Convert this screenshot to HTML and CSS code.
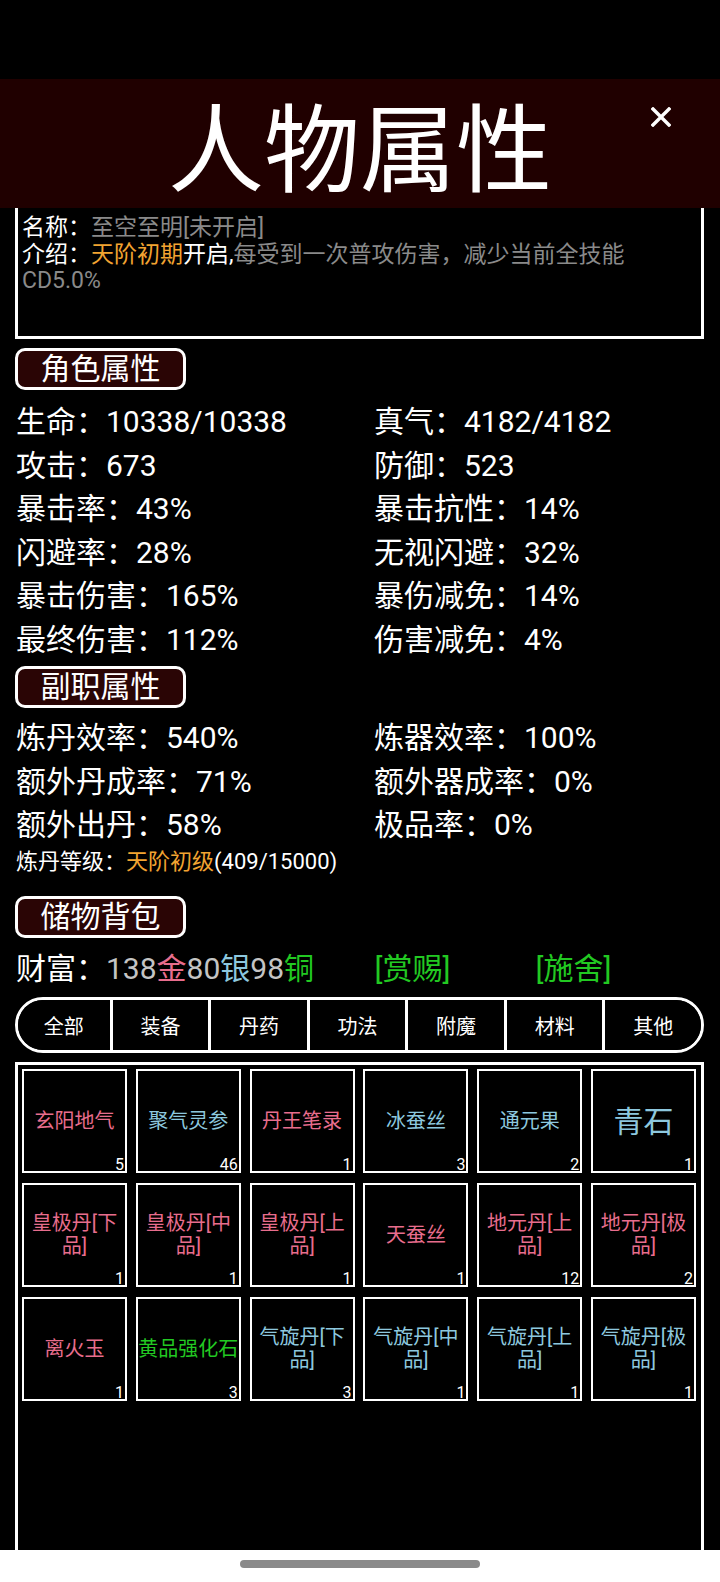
FILE: index.html
```html
<!DOCTYPE html>
<html lang="zh-CN">
<head>
    <meta charset="UTF-8">
    <meta name="viewport" content="width=720">
    <title>人物属性</title>
    <link rel="stylesheet" href="styles.css">
</head>
<body>
    <div class="status-bar"></div>

    <header class="title-bar">
        <h1 class="title">人物属性</h1>
        <button class="close" aria-label="关闭">
            <svg width="20" height="20" viewBox="0 0 20 20">
                <path d="M2 2 L18 18 M18 2 L2 18" stroke="#fff" stroke-width="3.4" stroke-linecap="square"/>
            </svg>
        </button>
    </header>

    <main class="content">
        <div class="skill-box">
            <p>名称：<span class="dim">至空至明[未开启]</span></p>
            <p>介绍：<span class="gold">天阶初期</span>开启,<span class="dim">每受到一次普攻伤害，减少当前全技能CD5.0%</span></p>
        </div>

        <h2 class="section-title">角色属性</h2>
        <div class="stats">
            <div>生命：10338/10338</div>
            <div>真气：4182/4182</div>
            <div>攻击：673</div>
            <div>防御：523</div>
            <div>暴击率：43%</div>
            <div>暴击抗性：14%</div>
            <div>闪避率：28%</div>
            <div>无视闪避：32%</div>
            <div>暴击伤害：165%</div>
            <div>暴伤减免：14%</div>
            <div>最终伤害：112%</div>
            <div>伤害减免：4%</div>
        </div>

        <h2 class="section-title section-gap">副职属性</h2>
        <div class="stats stats-side">
            <div>炼丹效率：540%</div>
            <div>炼器效率：100%</div>
            <div>额外丹成率：71%</div>
            <div>额外器成率：0%</div>
            <div>额外出丹：58%</div>
            <div>极品率：0%</div>
        </div>
        <p class="level">炼丹等级：<span class="gold">天阶初级</span>(409/15000)</p>

        <h2 class="section-title bag-title">储物背包</h2>
        <p class="wealth">
            财富：<span class="coin">138</span><span class="pink">金</span><span class="coin">80</span><span class="blue">银</span><span class="coin">98</span><span class="green">铜</span>
            <a class="action reward">[赏赐]</a><a class="action alms">[施舍]</a>
        </p>

        <nav class="tabs">
            <button class="tab">全部</button>
            <button class="tab">装备</button>
            <button class="tab">丹药</button>
            <button class="tab">功法</button>
            <button class="tab">附魔</button>
            <button class="tab">材料</button>
            <button class="tab">其他</button>
        </nav>

        <div class="bag">
            <div class="item pink">玄阳地气<span class="count">5</span></div>
            <div class="item blue">聚气灵参<span class="count">46</span></div>
            <div class="item pink">丹王笔录<span class="count">1</span></div>
            <div class="item blue">冰蚕丝<span class="count">3</span></div>
            <div class="item blue">通元果<span class="count">2</span></div>
            <div class="item blue big">青石<span class="count">1</span></div>

            <div class="item pink">皇极丹[下品]<span class="count">1</span></div>
            <div class="item pink">皇极丹[中品]<span class="count">1</span></div>
            <div class="item pink">皇极丹[上品]<span class="count">1</span></div>
            <div class="item pink">天蚕丝<span class="count">1</span></div>
            <div class="item pink">地元丹[上品]<span class="count">12</span></div>
            <div class="item pink">地元丹[极品]<span class="count">2</span></div>

            <div class="item pink">离火玉<span class="count">1</span></div>
            <div class="item green">黄品强化石<span class="count">3</span></div>
            <div class="item blue">气旋丹[下品]<span class="count">3</span></div>
            <div class="item blue">气旋丹[中品]<span class="count">1</span></div>
            <div class="item blue">气旋丹[上品]<span class="count">1</span></div>
            <div class="item blue">气旋丹[极品]<span class="count">1</span></div>
        </div>
    </main>

    <div class="nav-bar"><span class="nav-pill"></span></div>
</body>
</html>
```

FILE: styles.css
```css
* {
    box-sizing: border-box;
}

html,
body {
    margin: 0;
}

body {
    position: relative;
    width: 720px;
    height: 1582px;
    overflow: hidden;
    background: #000;
    color: #fff;
    font-family: Roboto, "Noto Sans CJK SC", sans-serif;
}

.status-bar {
    height: 79px;
}

.title-bar {
    position: relative;
    height: 129px;
    display: flex;
    justify-content: center;
    align-items: center;
    background: #200000;
}

.title {
    margin: 0;
    padding-top: 15px;
    font-size: 96px;
    font-weight: 400;
    line-height: 1;
}

.close {
    position: absolute;
    top: 28px;
    right: 49px;
    width: 20px;
    height: 20px;
    padding: 0;
    border: none;
    background: none;
}

.close svg {
    display: block;
}

.content {
    padding: 0 16px 0 15px;
}

.skill-box {
    height: 131px;
    padding: 7px 40px 0 4px;
    border: 3px solid #fff;
    border-top: none;
    font-size: 23px;
    line-height: 26.5px;
}

.skill-box p {
    margin: 0;
}

.dim {
    color: #8a8a8a;
}

.gold {
    color: #f2a431;
}

.pink {
    color: #e86d8d;
}

.blue {
    color: #8dc8df;
}

.green {
    color: #22c922;
}

.coin {
    color: #c4c4c4;
}

.section-title {
    width: 171px;
    height: 42px;
    margin: 9px 0 0;
    border: 3px solid #fff;
    border-radius: 10px;
    background: #2a0505;
    font-size: 30px;
    font-weight: 400;
    line-height: 36px;
    text-align: center;
}

.section-gap {
    margin-top: 5px;
}

.stats {
    display: grid;
    grid-template-columns: 358px 1fr;
    margin-top: 10px;
    padding-left: 1px;
    font-size: 30px;
    line-height: 43.5px;
}

.stats-side {
    margin-top: 8px;
}

.level {
    margin: 0;
    padding-left: 1px;
    font-size: 22px;
    line-height: 30px;
}

.bag-title {
    margin-top: 19.5px;
}

.wealth {
    margin: 8.5px 0 0;
    padding-left: 1px;
    font-size: 30px;
    line-height: 43.5px;
    white-space: nowrap;
}

.action {
    color: #22c922;
}

.reward {
    margin-left: 53px;
}

.alms {
    margin-left: 85px;
}

.tabs {
    display: grid;
    grid-template-columns: 0.93fr repeat(6, 1fr);
    height: 56px;
    margin-top: 7px;
    border: 3px solid #fff;
    border-radius: 28px;
    overflow: hidden;
}

.tab {
    padding: 0;
    border: none;
    border-left: 3px solid #fff;
    background: #000;
    color: #fff;
    font-family: inherit;
    font-size: 20px;
}

.tab:first-child {
    border-left: none;
}

.bag {
    display: grid;
    grid-template-columns: repeat(6, 105px);
    grid-auto-rows: 104px;
    column-gap: 8.8px;
    row-gap: 10px;
    align-content: start;
    height: 520px;
    margin-top: 9px;
    padding: 4px;
    border: 3px solid #fff;
}

.item {
    position: relative;
    display: flex;
    align-items: center;
    justify-content: center;
    border: 2px solid #fff;
    font-size: 20px;
    line-height: 23px;
    text-align: center;
}

.item.big {
    font-size: 30px;
}

.count {
    position: absolute;
    right: 1px;
    bottom: -2px;
    color: #fff;
    font-size: 16px;
    line-height: 1;
}

.nav-bar {
    position: absolute;
    left: 0;
    right: 0;
    bottom: 0;
    height: 32px;
    display: flex;
    justify-content: center;
    padding-top: 10px;
    background: #fff;
}

.nav-pill {
    width: 240px;
    height: 8px;
    border-radius: 4px;
    background: #8a8a8a;
}
```
